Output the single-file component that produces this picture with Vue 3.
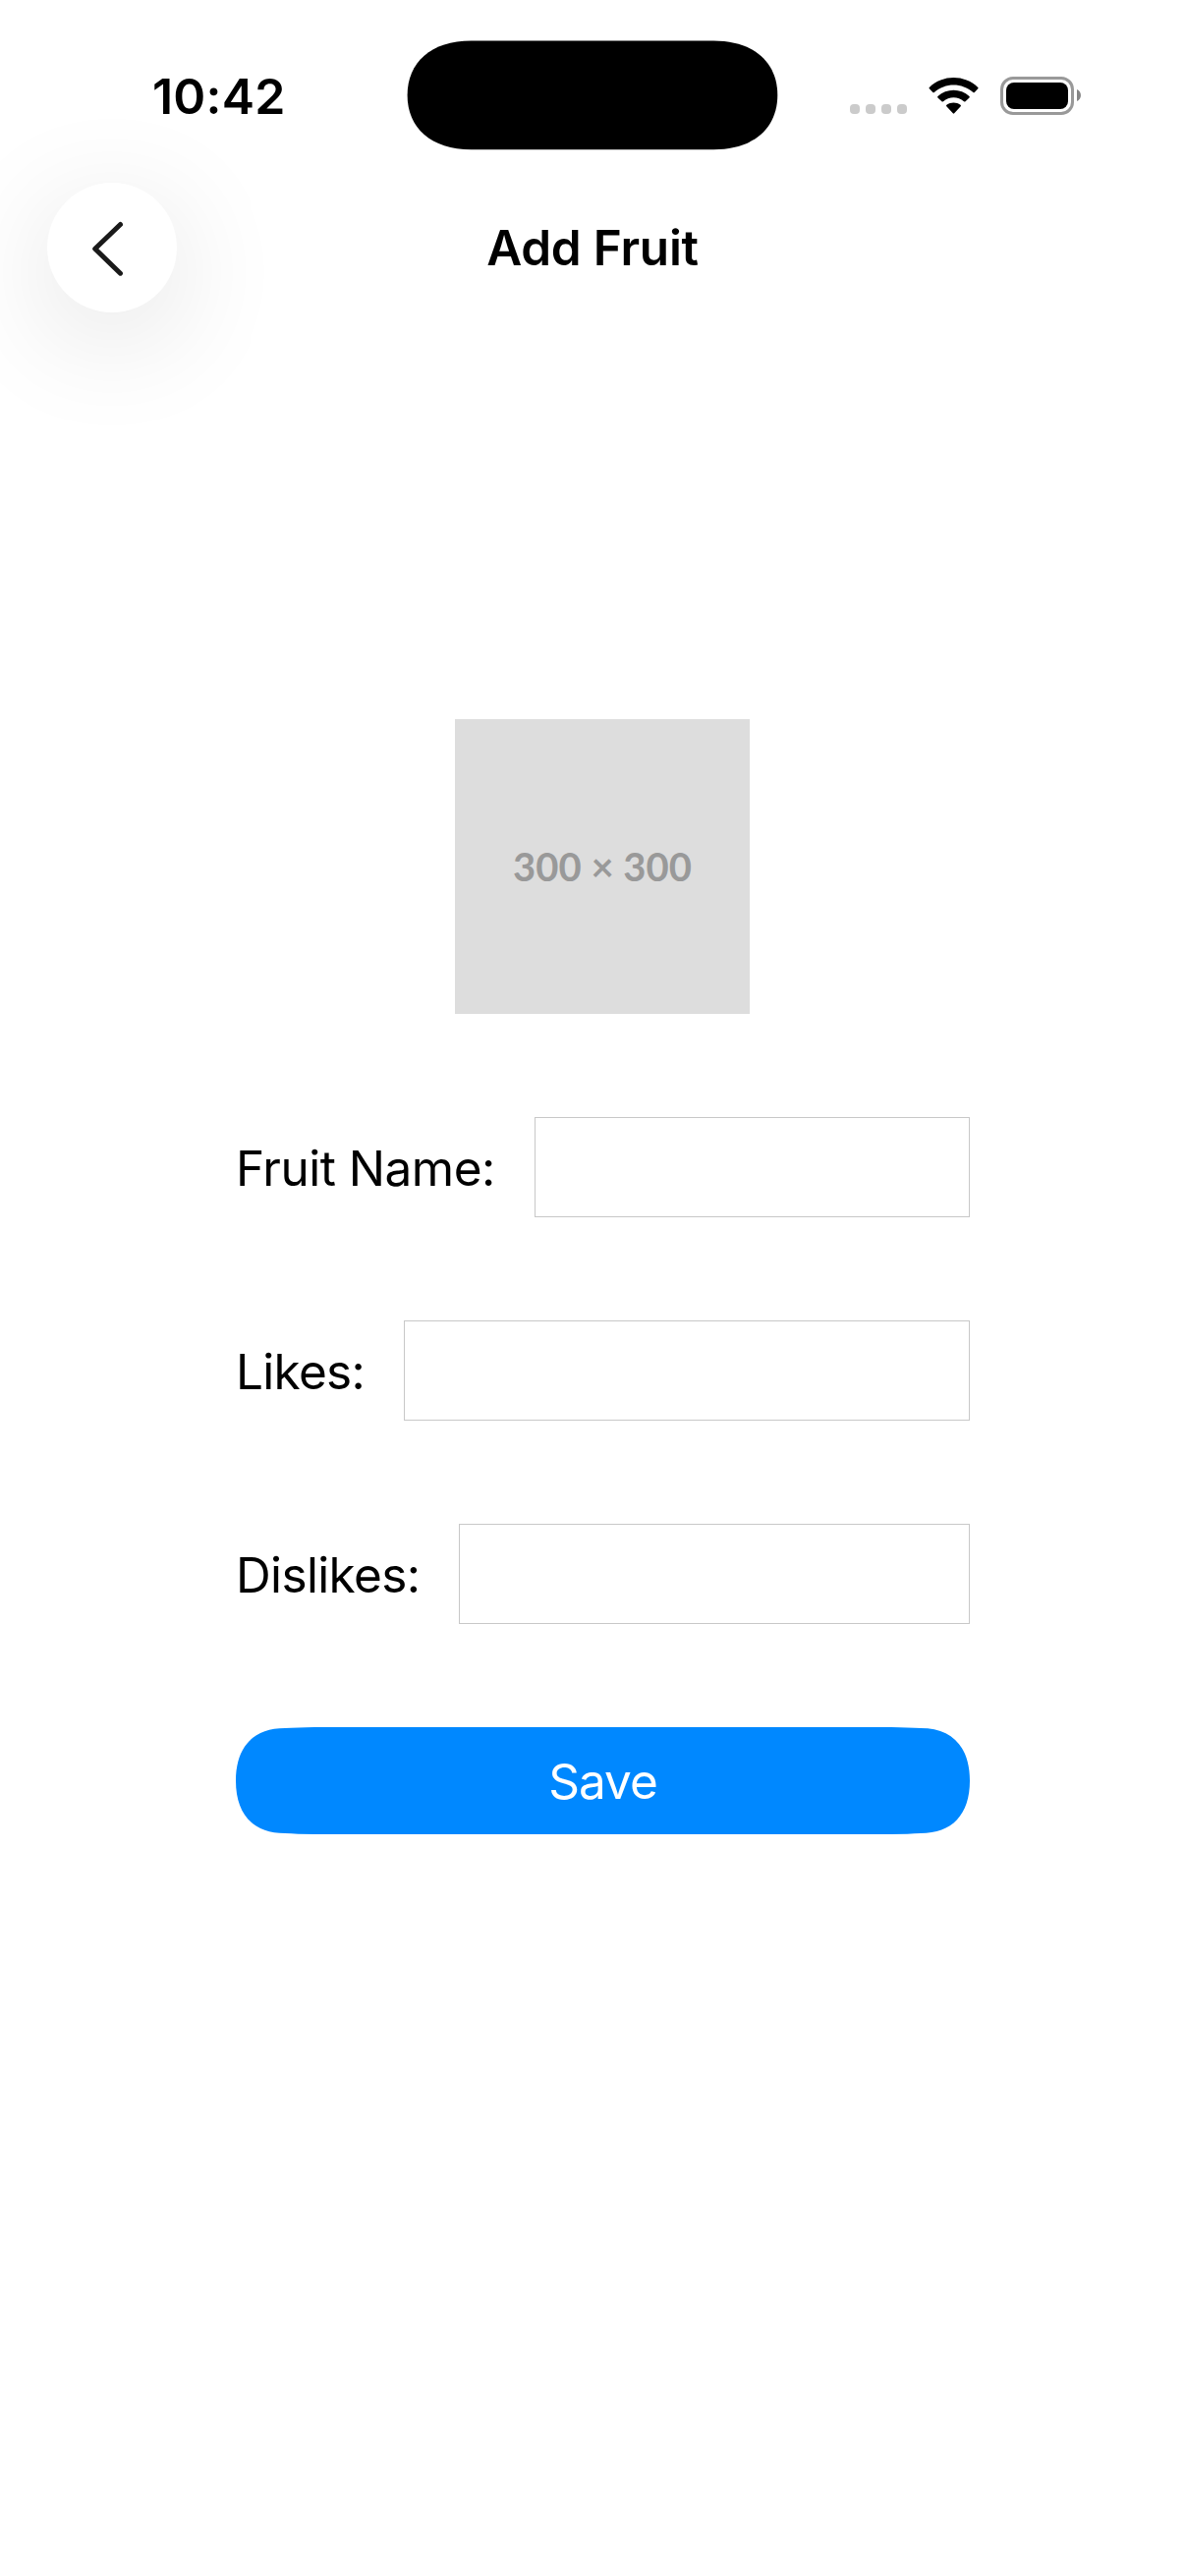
<script setup>
import { reactive } from 'vue'

const fields = reactive([
  { id: 'name', label: 'Fruit Name:', width: 443, spacing: '-0.5px', value: '' },
  { id: 'likes', label: 'Likes:', width: 576, spacing: '-0.7px', value: '' },
  { id: 'dislikes', label: 'Dislikes:', width: 520, spacing: '-0.65px', value: '' },
])
</script>

<template>
  <div class="screen">
    <header class="status">
      <div class="time">10:42</div>
      <svg class="island" width="378" height="112" viewBox="-0.6 -0.4 378 112">
        <path d="M0 55.4C0 22 24 0 65 0H311.7C352.7 0 376.7 22 376.7 55.4S352.7 110.8 311.7 110.8H65C24 110.8 0 89 0 55.4Z" />
      </svg>
      <div class="indicators">
        <svg width="236" height="40" viewBox="865 78 236 40">
          <g fill="#cbcbcb">
            <rect x="865" y="106" width="10" height="10" rx="4" />
            <rect x="881" y="106" width="10" height="10" rx="4" />
            <rect x="897" y="106" width="10" height="10" rx="4" />
            <rect x="913" y="106" width="10" height="10" rx="4" />
          </g>
          <path d="M945.8 88.9Q945.2 89.6 945.8 90.3L949.4 93.9Q950.1 94.6 950.8 93.9C962 83.9 979 83.9 990.4 93.9Q991.1 94.6 991.8 93.9L995.3 90.3Q995.9 89.6 995.3 88.9C981.5 75.7 959.5 75.7 945.8 88.9Z" />
          <path d="M954.4 98Q953.8 98.7 954.4 99.4L958.5 103.3Q959.2 103.9 960 103.2C966 97.9 975 97.9 981 103.2Q981.8 103.9 982.5 103.3L986.5 99.4Q987.1 98.7 986.5 98C977.5 89.7 963.5 89.7 954.4 98Z" />
          <path d="M963.4 106.8C967.6 103.6 973.4 103.6 977.5 106.8Q978.4 107.5 977.7 108.3L971.2 115.3Q970.5 116 969.8 115.3L963.3 108.3Q962.6 107.5 963.4 106.8Z" />
          <rect x="1019.5" y="79.5" width="72" height="36" rx="11.5" fill="none" stroke="#999" stroke-width="3" />
          <rect x="1024" y="84" width="63" height="27" rx="8" />
          <path d="M1096 91C1101.3 93.3 1101.3 100.7 1096 103Z" fill="#858585" />
        </svg>
      </div>
    </header>

    <nav class="nav">
      <button class="back" aria-label="Back">
        <svg width="132" height="132" viewBox="0 0 132 132">
          <path d="M74.5 42.5L48.7 67.2L74.5 92.2" fill="none" stroke="#1a1a1a" stroke-width="5" stroke-linecap="round" stroke-linejoin="round" />
        </svg>
      </button>
      <h1 class="title">Add Fruit</h1>
      <div class="balance"></div>
    </nav>

    <main class="form">
      <div class="picture"><span>300 × 300</span></div>
      <div v-for="field in fields" :key="field.id" class="row">
        <label :for="field.id" :style="{ letterSpacing: field.spacing }">{{ field.label }}</label>
        <input :id="field.id" v-model="field.value" type="text" :style="{ width: field.width + 'px' }" />
      </div>
      <button class="save">
        <svg class="save-shape" width="747" height="109" viewBox="0 0 747 109">
          <path d="M0 54.5C0 20 18 1 50 1Q62 .2 80 0H667Q685 .2 697 1C729 1 747 20 747 54.5S729 108 697 108Q685 108.8 667 109H80Q62 108.8 50 108C18 108 0 89 0 54.5Z" fill="#08f" />
        </svg>
        <span>Save</span>
      </button>
    </main>
  </div>
</template>

<style>
body {
  margin: 0;
  background: #fff;
}
</style>

<style scoped>
.screen {
  width: 1206px;
  height: 2622px;
  overflow: hidden;
  background: #fff;
  color: #000;
  font-family: Inter, "Liberation Sans", sans-serif;
}

.status {
  display: grid;
  grid-template-columns: 414px 377px 415px;
  height: 185px;
}

.time {
  padding: 68px 0 0 155px;
  font-size: 50px;
  line-height: 60px;
  font-weight: 600;
  letter-spacing: 0.2px;
}

.island {
  display: block;
  margin-top: 41px;
}

.indicators {
  padding: 78px 0 0 74px;
}

.indicators svg {
  display: block;
}

.nav {
  display: flex;
  align-items: center;
  justify-content: space-between;
  height: 133px;
  padding: 0 48px;
}

.back {
  width: 132px;
  height: 132px;
  padding: 0;
  border: 0;
  border-radius: 50%;
  background: #fff;
  box-shadow: 0 25px 120px rgba(0, 0, 0, 0.12);
}

.back svg {
  display: block;
}

.balance {
  width: 132px;
}

.title {
  margin: 0;
  font-size: 49.5px;
  line-height: 60px;
  font-weight: 600;
  letter-spacing: -0.25px;
  white-space: nowrap;
}

.form {
  display: flex;
  flex-direction: column;
  gap: 105px;
  width: 747px;
  margin: 414px 0 0 240px;
}

.picture {
  display: flex;
  align-items: center;
  justify-content: center;
  width: 300px;
  height: 300px;
  margin-left: 223px;
  background: #ddd;
  color: #999;
  font-family: Lato, sans-serif;
  font-size: 40px;
  font-weight: 700;
}

.row {
  display: flex;
  align-items: center;
  justify-content: space-between;
  height: 102px;
}

.row label {
  padding-top: 2px;
  font-size: 49.5px;
  line-height: 60px;
  white-space: nowrap;
}

.row input {
  box-sizing: border-box;
  height: 102px;
  padding: 0 30px;
  border: 1px solid #c8c8c8;
  border-radius: 0;
  outline: 0;
  background: transparent;
  font: inherit;
}

.save {
  display: grid;
  place-items: center;
  width: 747px;
  height: 109px;
  padding: 0;
  border: 0;
  background: transparent;
  color: #fff;
  font-family: inherit;
  font-size: 49.5px;
  line-height: 60px;
  letter-spacing: -1px;
}

.save > * {
  grid-area: 1 / 1;
}
</style>
